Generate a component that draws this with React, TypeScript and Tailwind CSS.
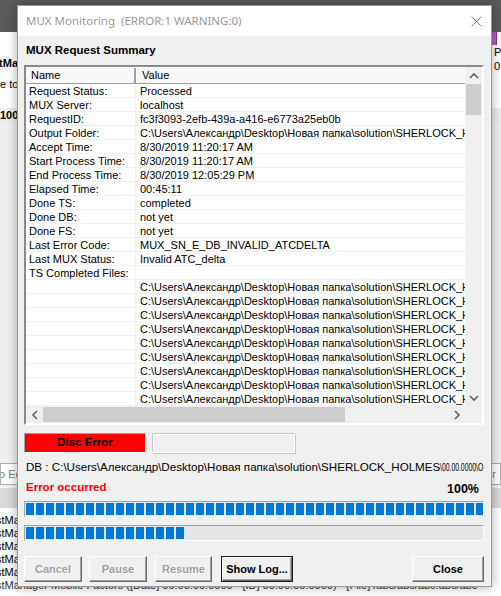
import React from "react";

const PATH = "C:\\Users\\Александр\\Desktop\\Новая папка\\solution\\SHERLOCK_HOLMES";

const summary: [string, string][] = [
  ["Request Status:", "Processed"],
  ["MUX Server:", "localhost"],
  ["RequestID:", "fc3f3093-2efb-439a-a416-e6773a25eb0b"],
  ["Output Folder:", PATH],
  ["Accept Time:", "8/30/2019 11:20:17 AM"],
  ["Start Process Time:", "8/30/2019 11:20:17 AM"],
  ["End Process Time:", "8/30/2019 12:05:29 PM"],
  ["Elapsed Time:", "00:45:11"],
  ["Done TS:", "completed"],
  ["Done DB:", "not yet"],
  ["Done FS:", "not yet"],
  ["Last Error Code:", "MUX_SN_E_DB_INVALID_ATCDELTA"],
  ["Last MUX Status:", "Invalid ATC_delta"],
  ["TS Completed Files:", ""],
];

const files = Array.from({ length: 9 }, (_, i) => PATH + "\\00.00.0000\\part_0" + (i + 1) + ".ts");

function Chevron({ dir }: { dir: "up" | "down" | "left" | "right" }) {
  const d = {
    up: "M1 6 L5 2 L9 6",
    down: "M1 2 L5 6 L9 2",
    left: "M6 1 L2 5 L6 9",
    right: "M2 1 L6 5 L2 9",
  }[dir];
  const vertical = dir === "up" || dir === "down";
  return (
    <svg width={vertical ? 10 : 8} height={vertical ? 8 : 10} viewBox={vertical ? "0 0 10 8" : "0 0 8 10"}>
      <path d={d} fill="none" stroke="#606060" strokeWidth="1.6" />
    </svg>
  );
}

function Bar({ blocks }: { blocks: number }) {
  return (
    <div className="h-[16px] border border-t-[#a0a0a0] border-l-[#a0a0a0] border-r-white border-b-white bg-[#e6e6e6] overflow-hidden">
      <div className="flex gap-[2px] h-full py-[1px] pl-[1px]">
        {Array.from({ length: blocks }, (_, i) => (
          <div key={i} className="w-[8px] shrink-0 h-full bg-[#0078d7]" />
        ))}
      </div>
    </div>
  );
}

function Btn({ label, w, disabled, def }: { label: string; w: string; disabled?: boolean; def?: boolean }) {
  return (
    <div className={`h-[26px] ${w} ${def ? "border border-[#1a1a1a]" : ""}`}>
      <div
        className={`h-full flex items-center justify-center border border-t-white border-l-white border-r-[#696969] border-b-[#696969] shadow-[inset_-1px_-1px_0_#a0a0a0] font-bold text-[11px] ${
          disabled ? "text-[#a0a0a0] [text-shadow:1px_1px_0_#ffffff]" : "text-black"
        }`}
      >
        {label}
      </div>
    </div>
  );
}

export default function App() {
  return (
    <div className="relative w-[501px] h-[596px] overflow-hidden bg-[#f0f0f0] font-['Liberation_Sans',Arial,sans-serif] text-black">
      {/* window behind the dialog */}
      <div className="h-[32px] bg-[#5b5b5b]" />
      <div className="h-[76px] bg-white flex justify-between text-[11px] leading-[14px]">
        <div className="pt-[24px]">
          <div className="font-bold -ml-[7px]">stManager</div>
          <div className="mt-[7px]">e to Edit</div>
        </div>
        <div className="w-[9px] overflow-hidden">
          <div className="h-[13px] w-[5px] bg-[#b45cc4] border-r border-[#8a3a9a]" />
          <div className="pl-[2px]">P</div>
          <div className="pl-[2px]">0</div>
        </div>
      </div>
      <div className="h-[14px] text-[11px] leading-[14px] font-bold bg-[#ececec]">100</div>
      <div className="h-[341px]" />
      <div className="h-[22px] flex justify-between text-[11px] leading-[20px]">
        <div className="w-[40px] bg-white border border-[#b0b0b0] overflow-hidden text-[#7a7a7a] whitespace-nowrap">
          <span className="-ml-[5px] inline-block">to Edit</span>
        </div>
        <div className="w-[30px] bg-white border border-[#b0b0b0] text-right pr-[4px] text-[#7a7a7a]">r</div>
      </div>
      <div className="h-[3px]" />
      <div className="h-[20px] bg-[#d9d9d9]" />
      <div className="bg-white pt-[6px] text-[11px] leading-[13px] h-[88px]">
        {[0, 1, 2, 3, 4].map((i) => (
          <div key={i} className="-ml-[4px] whitespace-nowrap">stManager</div>
        ))}
        <div className="-ml-[4px] whitespace-nowrap text-[#333]">
          stManager  Mobile Factors ([Date] 00:00:00:0000 - [ID] 00:00:00:0000) - [File] /abc/abc/abc.abc/abc
        </div>
      </div>

      {/* dialog */}
      <div className="absolute left-[17px] top-[5px] w-[475px] h-[582px] border border-[#9a9a9a] bg-[#f0f0f0] shadow-[0_0_10px_rgba(0,0,0,0.35)] flex flex-col">
        <div className="h-[30px] bg-white flex items-center justify-between pl-[8px] pr-[9px]">
          <span className="font-['Noto_Sans',sans-serif] text-[11.5px] text-[#999999] whitespace-pre">
            MUX Monitoring  (ERROR:1 WARNING:0)
          </span>
          <svg width="11" height="11" viewBox="0 0 11 11">
            <path d="M0.5 0.5 L10.5 10.5 M10.5 0.5 L0.5 10.5" stroke="#8a8a8a" strokeWidth="1" />
          </svg>
        </div>

        <div className="flex flex-col pl-[6px] pr-[7px]">
          <div className="mt-[7px] h-[14px] leading-[14px] font-bold text-[11.5px] pl-[2px]">MUX Request Summary</div>

          {/* list view */}
          <div className="mt-[8px] h-[360px] border-2 border-t-[#8a8a8a] border-l-[#8a8a8a] border-r-white border-b-white bg-white flex flex-col">
            <div className="flex h-[339px]">
              <div className="flex-1 min-w-0 overflow-hidden text-[11px]">
                <div className="flex h-[17px] bg-[#f7f7f7] border-b border-[#a0a0a0] border-t border-t-white leading-[15px]">
                  <div className="w-[110px] shrink-0 pl-[5px] border-r-2 border-[#a0a0a0]">Name</div>
                  <div className="flex-1 pl-[5px] border-l border-white">Value</div>
                </div>
                {summary.map(([k, v]) => (
                  <div key={k} className="flex h-[14px] leading-[14px] border-b border-[#f0f0f0] whitespace-nowrap">
                    <div className="w-[110px] shrink-0 pl-[3px] border-r border-[#f0f0f0]">{k}</div>
                    <div className="pl-[4px]">{v}</div>
                  </div>
                ))}
                {files.map((f, i) => (
                  <div key={i} className="flex h-[14px] leading-[14px] border-b border-[#f0f0f0] whitespace-nowrap">
                    <div className="w-[110px] shrink-0 border-r border-[#f0f0f0]" />
                    <div className="pl-[4px]">{f}</div>
                  </div>
                ))}
              </div>
              <div className="w-[17px] shrink-0 bg-[#f0f0f0] flex flex-col">
                <div className="h-[17px] flex items-center justify-center">
                  <Chevron dir="up" />
                </div>
                <div className="h-[31px] mx-[1px] bg-[#cdcdcd]" />
                <div className="flex-1" />
                <div className="h-[17px] flex items-center justify-center">
                  <Chevron dir="down" />
                </div>
              </div>
            </div>
            <div className="flex h-[17px] bg-[#f0f0f0]">
              <div className="w-[17px] flex items-center justify-center">
                <Chevron dir="left" />
              </div>
              <div className="w-[302px] my-[1px] bg-[#cdcdcd]" />
              <div className="flex-1" />
              <div className="w-[17px] flex items-center justify-center">
                <Chevron dir="right" />
              </div>
              <div className="w-[17px]" />
            </div>
          </div>

          {/* status boxes */}
          <div className="mt-[8px] flex gap-[6px] h-[20px]">
            <div className="w-[122px] bg-[#ff0000] border border-t-[#a0a0a0] border-l-[#a0a0a0] border-r-white border-b-white flex items-center justify-center font-bold text-[11.5px]">
              Disc Error
            </div>
            <div className="w-[143px] border border-t-[#c8c8c8] border-l-[#c8c8c8] border-r-white border-b-white shadow-[inset_1px_1px_0_#ffffff,1px_1px_0_#c8c8c8]" />
          </div>

          <div className="mt-[7px] h-[14px] leading-[14px] text-[11.6px] pl-[2px] whitespace-nowrap overflow-hidden">
            DB : {PATH}
            <span className="inline-block origin-left scale-x-[0.62] text-[11px]">\00.00.0000\O</span>
          </div>

          <div className="mt-[6px] h-[15px] flex items-end justify-between pl-[2px] pr-[5px]">
            <span className="font-bold text-[11.5px] leading-[14px] text-[#ff0000] mb-[1px]">Error occurred</span>
            <span className="font-bold text-[12.5px] leading-[14px] -mb-[1px]">100%</span>
          </div>

          <div className="mt-[6px]">
            <Bar blocks={46} />
          </div>
          <div className="mt-[8px]">
            <Bar blocks={16} />
          </div>

          <div className="mt-[15px] flex items-center">
            <Btn label="Cancel" w="w-[58px]" disabled />
            <div className="w-[7px]" />
            <Btn label="Pause" w="w-[58px]" disabled />
            <div className="w-[8px]" />
            <Btn label="Resume" w="w-[57px]" disabled />
            <div className="w-[9px]" />
            <Btn label="Show Log..." w="w-[72px]" def />
            <div className="flex-1" />
            <Btn label="Close" w="w-[72px]" />
          </div>
        </div>
      </div>
    </div>
  );
}
